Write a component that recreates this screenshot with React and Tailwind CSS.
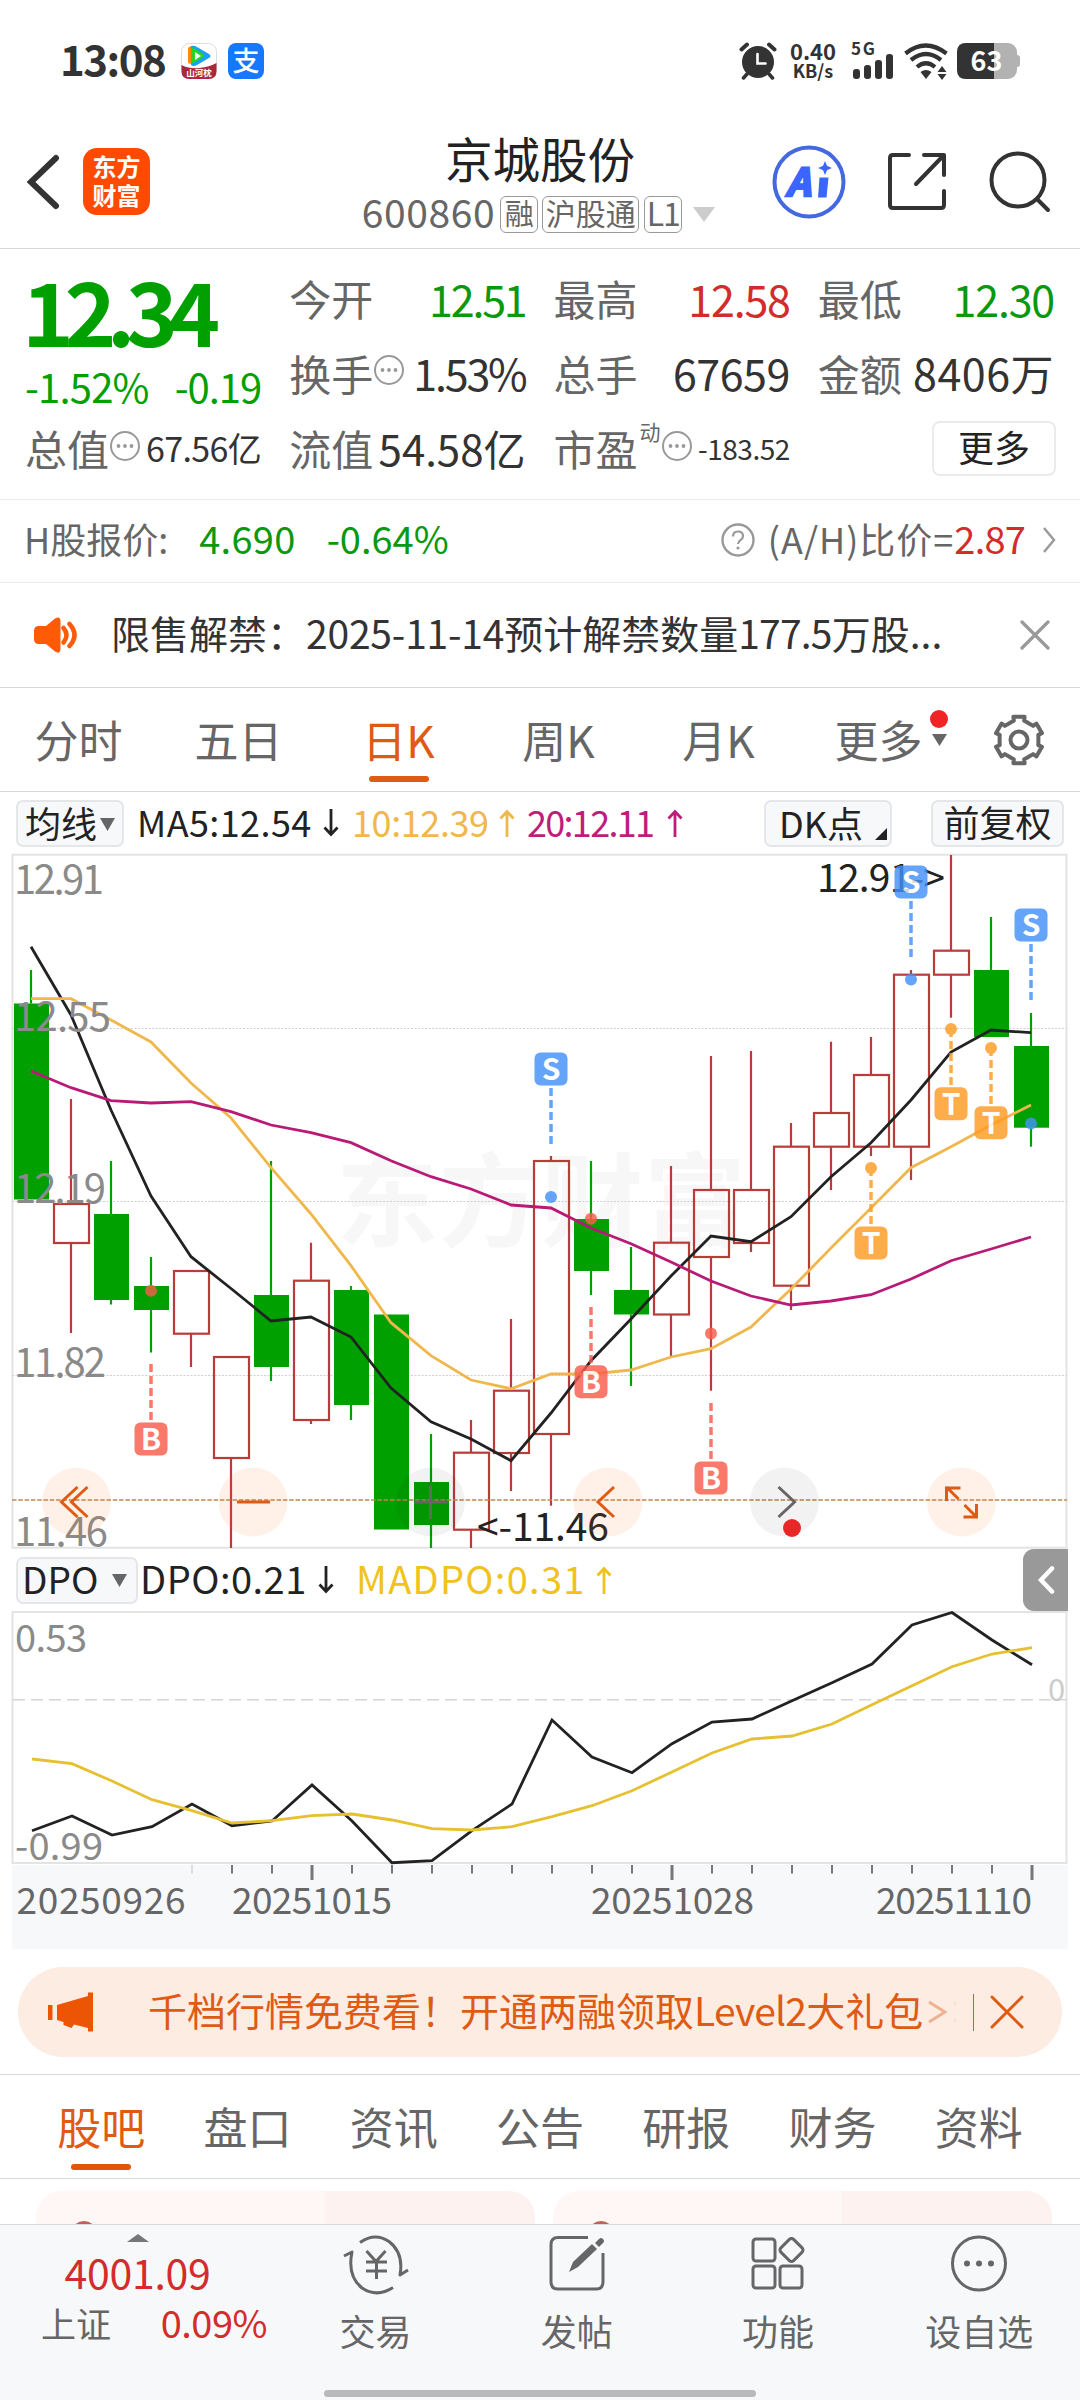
const GREEN = "#00a000";
const RED = "#b83c3a";

// [type, high, top, bottom, low]
const candles = [
  ["g", 970, 1003.5, 1199.5, 1199.5],
  ["r", 1099, 1204, 1243, 1333],
  ["g", 1161, 1214, 1300, 1304.5],
  ["g", 1257, 1286, 1310, 1352.5],
  ["r", 1271, 1271, 1333.7, 1367],
  ["r", 1357, 1357, 1458, 1548],
  ["g", 1161, 1295, 1367, 1381],
  ["r", 1242.7, 1280.7, 1420, 1424],
  ["g", 1286, 1290, 1405, 1420],
  ["g", 1314.5, 1314.5, 1529.5, 1529.5],
  ["g", 1434, 1482, 1525, 1548],
  ["r", 1420, 1452.7, 1529.7, 1548],
  ["r", 1319, 1390.7, 1453, 1491],
  ["r", 1156, 1161, 1434, 1505.7],
  ["g", 1161, 1219, 1271, 1295],
  ["g", 1247, 1290, 1314.5, 1386],
  ["r", 1166, 1242.7, 1314.5, 1356],
  ["r", 1056, 1190, 1257, 1390.7],
  ["r", 1051, 1190, 1243, 1252],
  ["r", 1123, 1146.7, 1285.7, 1310],
  ["r", 1041.7, 1113, 1146.7, 1190],
  ["r", 1037, 1075, 1146.7, 1156],
  ["r", 970, 974.7, 1146.7, 1180],
  ["r", 855, 950.7, 974.7, 1017.7],
  ["g", 917, 970, 1037, 1037],
  ["g", 1013, 1046, 1127.7, 1146.7],
];

const ma5 = [946.7, 1015, 1110, 1196, 1256.7, 1288.5, 1321, 1317, 1337, 1388, 1421.7, 1439, 1460.7, 1413, 1360.7, 1319, 1276, 1236, 1241.7, 1216.7, 1176.7, 1142.7, 1100, 1052, 1030, 1032.7];
const ma10 = [998.7, 998.7, 1020, 1042, 1083, 1118, 1167.7, 1214, 1265.7, 1322.7, 1355.7, 1380, 1388.7, 1374, 1374, 1370, 1357, 1348.7, 1327, 1289, 1248, 1208, 1167.7, 1146.7, 1125, 1105];
const ma20 = [1071, 1087.7, 1100.7, 1103, 1101.7, 1111.7, 1125, 1132.7, 1142.7, 1160.7, 1176.7, 1189, 1205, 1208, 1228, 1243.7, 1262, 1281, 1296, 1305, 1301, 1294.7, 1279, 1260.7, 1249, 1237];
const dpo = [1830.7, 1816, 1835, 1826.7, 1804, 1825.7, 1821, 1785, 1821, 1862.7, 1860.7, 1830.7, 1804, 1720, 1757, 1772.7, 1743.7, 1722, 1719, 1700.7, 1682.7, 1664, 1625, 1612.5, 1640, 1664.7];
const madpo = [1759, 1763.7, 1781, 1799.7, 1810.7, 1823, 1820.7, 1815.7, 1814, 1820, 1828.7, 1830, 1826.7, 1816.7, 1805.7, 1790.7, 1772, 1753, 1739, 1736, 1724, 1704.7, 1685.7, 1666.7, 1654, 1647.7];

// buy / sell / T markers: letter, x, badge centre, dash range, dot
const markers = [
  { t: "S", x: 551, y: 1069, from: 1088, to: 1145, dot: 1197 },
  { t: "S", x: 911, y: 882, from: 901, to: 958, dot: 979.5 },
  { t: "S", x: 1031, y: 925, from: 944, to: 1001, dot: 1123.5 },
  { t: "B", x: 151, y: 1439, from: 1364, to: 1421, dot: 1290.7 },
  { t: "B", x: 591, y: 1381.7, from: 1307, to: 1364, dot: 1218.7 },
  { t: "B", x: 711, y: 1478, from: 1403, to: 1460, dot: 1333.5 },
  { t: "T", x: 871, y: 1243, from: 1168, to: 1225, dot: 1168 },
  { t: "T", x: 951, y: 1103.7, from: 1029, to: 1086, dot: 1029 },
  { t: "T", x: 991, y: 1122.7, from: 1048, to: 1105, dot: 1048 },
];
const markerColor = { S: "#4391fa", B: "#fb5c4a", T: "#ff9a24" };

const points = (arr, x0) => arr.map((y, i) => `${x0 + i * 40},${y}`).join(" ");

function InfoDots() {
  return (
    <svg className="w-[32px] h-[32px] shrink-0 -mt-[5px]" viewBox="0 0 32 32" fill="none">
      <circle cx="16" cy="16" r="14" stroke="#999" strokeWidth="2" />
      <circle cx="9.5" cy="16" r="1.9" fill="#999" />
      <circle cx="16" cy="16" r="1.9" fill="#999" />
      <circle cx="22.5" cy="16" r="1.9" fill="#999" />
    </svg>
  );
}

function StatusBar() {
  return (
    <div className="h-[122px] flex items-center px-[60px] text-[#333]">
      <div className="w-[106px] text-[42px] leading-none font-bold tracking-[-1.500px] -mt-[6px]">13:08</div>
      <svg className="ml-[15px] w-[36px] h-[36px] overflow-visible" viewBox="0 0 36 36">
        <rect x=".5" y=".5" width="35" height="35" rx="8" fill="#fff" stroke="#ddd" />
        <path d="M7 6q0-3 3-2.500v17q-3 1-3-2z" fill="#ff8a00" />
        <path d="M10 3q3-1 6 1l12 7q3 2 0 4l-12 7q-4 2-6 0z" fill="#1ca0f5" />
        <path d="M10 5q2 0 4 1l8 5q2 1.500 0 3l-8 5q-2 1-4 1z" fill="#2bd41c" />
        <path d="M14 9l6 4-6 4z" fill="#fff" />
        <path d="M.5 22q8 4 18 3t17-5v8q0 8-8 8h-19q-8 0-8-8z" fill="#a92839" />
        <text x="18" y="33" fontSize="8.500" fontWeight="bold" fill="#fff" textAnchor="middle">山河枕</text>
      </svg>
      <svg className="ml-[11px] w-[36px] h-[36px] overflow-visible" viewBox="0 0 36 36">
        <rect width="36" height="36" rx="8" fill="#1677ff" />
        <text x="18" y="28" fontSize="27" fill="#fff" textAnchor="middle" fontWeight="500">支</text>
      </svg>

      <svg className="ml-auto w-[38px] h-[38px]" viewBox="0 0 38 38" stroke="#333" fill="none" strokeLinecap="round">
        <circle cx="19" cy="20" r="16" fill="#333" stroke="none" />
        <path d="M2.500 7.500L8 2.500M35.500 7.500L30 2.500" strokeWidth="4" />
        <path d="M8 32l-3.500 4M30 32l3.500 4" strokeWidth="3.500" />
        <path d="M18.500 12v9.500h8" stroke="#fff" strokeWidth="2.600" />
      </svg>
      <div className="ml-[11px] w-[50px] text-center font-bold -mt-[3px]">
        <div className="text-[22px] leading-[21px]">0.40</div>
        <div className="text-[18px] leading-[18px]">KB/s</div>
      </div>
      <svg className="ml-[13px] w-[43px] h-[38px] overflow-visible" viewBox="0 0 43 38" fill="#333">
        <text x="0" y="13" fontSize="17" fontWeight="bold" textLength="24">5G</text>
        <rect x="2" y="27" width="7" height="10" rx="3" />
        <rect x="13" y="23" width="7" height="14" rx="3" />
        <rect x="24" y="18" width="7" height="19" rx="3" />
        <rect x="35" y="12" width="7" height="25" rx="3" />
      </svg>
      <svg className="ml-[10px] w-[44px] h-[38px]" viewBox="0 0 44 38" fill="none" stroke="#333" strokeWidth="4.200">
        <path d="M1.500 11.500q20-16 41 0" />
        <path d="M7 18q15-12 30 0" />
        <path d="M13 25q9-7.500 18 0" />
        <path d="M16.500 30q5.500-4 11 0l-5.500 7z" fill="#333" stroke="none" />
        <path d="M33.500 30l4.500-6 4.500 6zM33.500 32l4.500 6 4.500-6z" fill="#333" stroke="none" />
      </svg>
      <svg className="ml-[9px] w-[63px] h-[38px] overflow-visible" viewBox="0 0 63 38">
        <rect x="0" y="1" width="60" height="36" rx="9" fill="#b2b2b2" />
        <path d="M60 13q3 0 3 3v6q0 3-3 3z" fill="#b2b2b2" />
        <path d="M9 1h28v36H9q-9 0-9-9V10q0-9 9-9z" fill="#333" />
        <text x="29.500" y="29" fontSize="27" fontWeight="bold" fill="#fff" textAnchor="middle" textLength="32">63</text>
      </svg>
    </div>
  );
}

function Header() {
  return (
    <div className="h-[127px] border-b border-[#d8d8da] grid grid-cols-[340px_400px_1fr] items-center pb-[7px]">
      <div className="flex items-center pl-[26px]">
        <svg className="w-[34px] h-[56px]" viewBox="0 0 34 56" fill="none" stroke="#333" strokeWidth="6" strokeLinecap="round">
          <path d="M30 4L5 28l25 24" />
        </svg>
        <div className="ml-[23px] w-[67px] h-[67px] rounded-[14px] bg-[#ff4a00] text-white font-bold text-[24px] leading-[29px] text-center pt-[3px]">
          东方<br />财富
        </div>
      </div>
      <div className="flex flex-col items-center">
        <div className="text-[47.500px] leading-none text-[#222]">京城股份</div>
        <div className="mt-[14px] -mb-[4px] -ml-[3px] flex items-center text-[#666]">
          <span className="text-[39px] leading-none tracking-[0.600px] -mt-[6px]">600860</span>
          <span className="ml-[5px] w-[38px] h-[37px] border border-[#999] rounded-[6px] text-[29px] leading-[30px] text-center">融</span>
          <span className="ml-[4px] w-[97px] h-[37px] border border-[#999] rounded-[6px] text-[30px] leading-[30px] text-center">沪股通</span>
          <span className="ml-[5px] w-[38px] h-[37px] border border-[#999] rounded-[6px] text-[32px] leading-[30px] text-center tracking-[-1px]">L1</span>
          <svg className="ml-[11px] w-[22px] h-[15px]" viewBox="0 0 22 15"><path d="M0 0h22L11 15z" fill="#ccc" /></svg>
        </div>
      </div>
      <div className="flex items-center pl-[32px]">
        <svg className="w-[74px] h-[74px] overflow-visible" viewBox="0 0 74 74" fill="none">
          <circle cx="37" cy="37" r="34.500" stroke="#4468e0" strokeWidth="4" />
          <text x="14" y="51" fontSize="38" fontWeight="bold" fill="#3a66ff" stroke="#3a66ff" strokeWidth="2.500" fontStyle="italic" textLength="27">A</text>
          <path d="M47.500 32.500h9l-2 20h-8.500z" fill="#3a66ff" />
          <path d="M53 18l1.500 3.500 3.500 1.500-3.500 1.500-1.500 3.500-1.500-3.500-3.500-1.500 3.500-1.500z" fill="#3a66ff" stroke="#3a66ff" strokeWidth="1.500" />
        </svg>
        <svg className="ml-[41px] w-[60px] h-[60px]" viewBox="0 0 60 60" fill="none" stroke="#333" strokeWidth="4" strokeLinecap="round" strokeLinejoin="round">
          <path d="M22 3H6Q3 3 3 6v47q0 3 3 3h48q3 0 3-3V39M37 3h20v20M57 3L29 32" />
        </svg>
        <svg className="ml-[42px] w-[62px] h-[62px]" viewBox="0 0 62 62" fill="none" stroke="#333" strokeWidth="4" strokeLinecap="round">
          <circle cx="29" cy="29" r="26.500" />
          <path d="M48 48l11 11" />
        </svg>
      </div>
    </div>
  );
}

function Quote({ label, children, color = "text-[#333]" }) {
  return (
    <div className="flex items-center justify-between text-[43px] leading-none whitespace-nowrap">
      <span className="text-[42px] text-[#666] flex items-center">{label}</span>
      <span className={color}>{children}</span>
    </div>
  );
}

function QuotePanel() {
  return (
    <div className="h-[251px] border-b border-[#ebebeb] pl-[25px] pr-[26px] pt-[12px] grid grid-cols-4 grid-rows-[74px_75px_76px] gap-x-[28px]">
      <div className="row-span-2 text-[#00a000]">
        <div className="text-[88px] leading-[89px] font-bold tracking-[-9.500px] mt-[3px] -ml-[3px]">12.34</div>
        <div className="flex justify-between text-[40px] leading-none mt-[13px]">
          <span className="tracking-[-0.800px]">-1.52%</span>
          <span className="tracking-[-1px]">-0.19</span>
        </div>
      </div>
      <Quote label="今开" color="text-[#0a980f] tracking-[-2.200px]">12.51</Quote>
      <Quote label="最高" color="text-[#d42c2c] tracking-[-1.200px]">12.58</Quote>
      <Quote label="最低" color="text-[#0a980f] tracking-[-1.200px]">12.30</Quote>
      <Quote label={<>换手<InfoDots /></>} color="text-[#333] tracking-[-2.200px]">1.53%</Quote>
      <Quote label="总手" color="text-[#333] tracking-[-0.500px]">67659</Quote>
      <Quote label="金额" color="text-[#333] tracking-[0.500px]">8406万</Quote>
      <Quote label={<>总值<InfoDots /></>} color="text-[#333] text-[34px] tracking-[-0.600px]">67.56亿</Quote>
      <Quote label="流值" color="text-[#333] text-[42px]">54.58亿</Quote>
      <Quote label={<>市盈<span className="text-[21px] -mt-[34px] ml-[2px]">动</span><InfoDots /></>} color="text-[#333] text-[28px] tracking-[-0.500px]">-183.52</Quote>
      <div className="flex items-center justify-end">
        <div className="-mr-[2px] w-[124px] h-[55px] border-2 border-[#ebebeb] rounded-[8px] text-[36px] leading-[47px] text-center text-[#222]">更多</div>
      </div>
    </div>
  );
}

function HShareRow() {
  return (
    <div className="h-[83px] border-b border-[#ebebeb] flex items-center px-[24px] pb-[6px] text-[36px] leading-none text-[#666] whitespace-nowrap">
      <span>H股报价:</span>
      <span className="ml-[31px] text-[38px] text-[#0a980f] tracking-[0.300px]">4.690</span>
      <span className="ml-[31px] text-[38px] text-[#0a980f]">-0.64%</span>
      <svg className="ml-auto w-[34px] h-[34px] mt-[3px]" viewBox="0 0 34 34" fill="none">
        <circle cx="17" cy="17" r="15.500" stroke="#999" strokeWidth="2.400" />
        <path d="M12 13.500q0-5 5-5t5 4.500q0 2.500-2.500 4.200T17 21" stroke="#999" strokeWidth="2.200" />
        <circle cx="17" cy="25" r="1.600" fill="#999" />
      </svg>
      <span className="ml-[13px] tracking-[1px]">(A/H)比价=</span>
      <span className="text-[38px] text-[#d42c2c] tracking-[-0.800px]">2.87</span>
      <svg className="ml-[17px] w-[14px] h-[26px] mt-[3px]" viewBox="0 0 14 26" fill="none" stroke="#999" strokeWidth="2.400">
        <path d="M2 1l10 12L2 25" />
      </svg>
    </div>
  );
}

function Notice() {
  return (
    <div className="h-[105px] border-b border-[#d8d8da] flex items-center pl-[33px] pr-[30px]">
      <svg className="w-[46px] h-[36px]" viewBox="0 0 46 36">
        <path d="M6 9h7L22 1.500q5-3 5.500 2v29q-.5 5-5.500 2L13 27H6q-5 0-5-5v-8q0-5 5-5z" fill="#ff5a05" />
        <path d="M30.500 11q6 7 0 14.500M36.500 7q10 11 0 22" fill="none" stroke="#ff5a05" strokeWidth="4.500" strokeLinecap="round" />
      </svg>
      <span className="ml-[32px] text-[39px] leading-none text-[#333] whitespace-nowrap -mt-[6px]">
        限售解禁：<span className="tracking-[-0.200px]">2025-11-14</span>预计解禁数量<span className="tracking-[-0.800px]">177.5</span>万股...
      </span>
      <svg className="ml-auto w-[30px] h-[30px]" viewBox="0 0 30 30" stroke="#999" strokeWidth="3.200" strokeLinecap="round">
        <path d="M2 2l26 26M28 2L2 28" />
      </svg>
    </div>
  );
}

function Gear() {
  const pts = [];
  for (let k = 0; k < 6; k++) {
    const a = -90 + k * 60;
    [[19.5, -23], [20, -15], [24, -13.5], [24, 13.5], [20, 15], [19.5, 23]].forEach(([r, d]) => {
      const t = ((a + d) * Math.PI) / 180;
      pts.push(`${(26 + r * Math.cos(t)).toFixed(1)},${(26 + r * Math.sin(t)).toFixed(1)}`);
    });
  }
  return (
    <svg className="w-[52px] h-[52px]" viewBox="0 0 52 52" fill="none" stroke="#666" strokeWidth="4" strokeLinejoin="round">
      <polygon points={pts.join(" ")} />
      <circle cx="26" cy="26" r="8.500" />
    </svg>
  );
}

function PeriodTabs() {
  const tabs = ["分时", "五日", "日K", "周K", "月K", "更多"];
  return (
    <div className="h-[104px] border-b border-[#d8d8da] flex text-[44px] leading-none text-[#666]">
      {tabs.map((t) => (
        <div key={t} className={`w-[160px] flex flex-col items-center pt-[29px] pr-[3px] ${t === "日K" ? "text-[#df5a12]" : ""}`}>
          <span className="relative">
            {t}
            {t === "更多" && (
              <span className="absolute left-full top-0 ml-[7px]">
                <span className="block w-[18px] h-[18px] rounded-full bg-[#f02424] -mt-[7px]" />
                <svg className="w-[15px] h-[12px] mt-[6px] ml-[2px]" viewBox="0 0 15 12"><path d="M0 0h15L7.500 12z" fill="#666" /></svg>
              </span>
            )}
          </span>
          {t === "日K" && <span className="mt-[15px] w-[60px] h-[6px] rounded-full bg-[#df5a12]" />}
        </div>
      ))}
      <div className="flex-1 flex justify-center pt-[26px] pr-[3px]"><Gear /></div>
    </div>
  );
}

function Arrow({ up, color }) {
  return (
    <svg className="w-[16px] h-[28px]" viewBox="0 0 16 28" fill="none" stroke={color} strokeWidth="2.800">
      {up ? <path d="M8 28V3M1.500 9.500L8 2.500l6.500 7" /> : <path d="M8 0v25M1.500 18.500L8 25.500l6.500-7" />}
    </svg>
  );
}

function MaRow() {
  return (
    <div className="h-[62px] flex items-center px-[16px] text-[36px] leading-none whitespace-nowrap text-[#222]">
      <div className="w-[108px] h-[47px] rounded-[7px] border-2 border-[#e5e6ea] bg-[#f7f8fa] flex items-center justify-center pb-[2px]">
        均线
        <svg className="ml-[3px] mt-[4px] w-[15px] h-[13px]" viewBox="0 0 15 13"><path d="M0 0h15L7.500 13z" fill="#666" /></svg>
      </div>
      <div className="flex items-center">
        <span className="ml-[13px] w-[186px] -mt-[4px] tracking-[0.400px]">MA5:12.54</span>
        <Arrow color="#222" />
        <span className="ml-[13px] w-[147px] -mt-[4px] text-[#f0b84c] tracking-[-0.400px]">10:12.39</span>
        <Arrow up color="#f0b84c" />
        <span className="ml-[12px] w-[140px] -mt-[4px] text-[#c01c7c] tracking-[-1.700px]">20:12.11</span>
        <Arrow up color="#c01c7c" />
      </div>
      <div className="ml-auto w-[128px] h-[47px] rounded-[7px] border-2 border-[#e5e6ea] bg-[#f7f8fa] flex items-end pl-[13px] pb-[5px]">
        DK点
        <svg className="ml-[12px] w-[12px] h-[12px]" viewBox="0 0 12 12"><path d="M12 0v12H0z" fill="#222" /></svg>
      </div>
      <div className="ml-[39px] w-[133px] h-[47px] rounded-[7px] border-2 border-[#e5e6ea] bg-[#f7f8fa] leading-[38px] text-center">前复权</div>
    </div>
  );
}

function RoundButton({ x, gray, children }) {
  return (
    <g transform={`translate(${x} 1502)`} fill="none" stroke={gray ? "#666" : "#df5a12"} strokeWidth="3">
      <circle r="34.500" fill={gray ? "#000" : "#ff6a1a"} fillOpacity={gray ? 0.05 : 0.1} stroke="none" />
      {children}
    </g>
  );
}

function KChart() {
  return (
    <svg className="block w-[1080px] h-[695px] overflow-visible" viewBox="0 854 1080 695">
      <rect x="12.500" y="854.700" width="1054" height="693" fill="none" stroke="#e3e3e5" strokeWidth="2" />
      <text x="336" y="1239" fontSize="102" fontWeight="bold" fill="#f7f7f7" textLength="410">东方财富</text>
      {[1028.5, 1201.5, 1375.5].map((y) => (
        <line key={y} x1="12" x2="1067" y1={y} y2={y} stroke="#d0d0d0" strokeWidth="1" strokeDasharray="2 1.500" />
      ))}
      {candles.map(([c, hi, top, bot, lo], i) => {
        const x = 31 + i * 40;
        const color = c === "g" ? GREEN : RED;
        return (
          <g key={i} stroke={color} strokeWidth="2.200">
            <line x1={x} x2={x} y1={hi} y2={top} />
            <line x1={x} x2={x} y1={bot} y2={lo} />
            {c === "g" ? (
              <rect x={x - 17} y={top} width="35" height={bot - top} fill={color} stroke="none" />
            ) : (
              <rect x={x - 17} y={top} width="35" height={bot - top} fill="none" />
            )}
          </g>
        );
      })}
      <g fill="none" strokeWidth="2.800">
        <polyline points={points(ma5, 31)} stroke="#222" />
        <polyline points={points(ma10, 31)} stroke="#f0b84c" />
        <polyline points={points(ma20, 31)} stroke="#b81a75" />
      </g>
      <g fill="#222" fontSize="39">
        <text x="817" y="892" textLength="128">12.91-&gt;</text>
        <text x="477" y="1541" textLength="132">&lt;-11.46</text>
      </g>
      <g fill="#8a8a8a" fontSize="40">
        <text x="14" y="894" textLength="90">12.91</text>
        <text x="14" y="1030.500" textLength="97">12.55</text>
        <text x="14" y="1203" textLength="92">12.19</text>
        <text x="14" y="1377" textLength="92">11.82</text>
        <text x="14" y="1546" textLength="94">11.46</text>
      </g>
      {markers.map((m, i) => (
        <g key={i} opacity="0.82" fill={markerColor[m.t]}>
          <line x1={m.x} x2={m.x} y1={m.from} y2={m.to} stroke={markerColor[m.t]} strokeWidth="3.500" strokeDasharray="8 4" />
          <circle cx={m.x} cy={m.dot} r="6" />
          <rect x={m.x - 16.5} y={m.y - 16.5} width="33" height="33" rx="6" />
          <text x={m.x} y={m.y + 11} fontSize="30" fontWeight="bold" fill="#fff" textAnchor="middle">{m.t}</text>
        </g>
      ))}
      <line x1="12" x2="1067" y1="1500" y2="1500" stroke="#c08850" strokeWidth="1.400" strokeDasharray="4.500 1.800" />
      <RoundButton x={76.5}><path d="M1-15L-15 0 1 15M11-15L-5 0 11 15" /></RoundButton>
      <RoundButton x={253}><path d="M-16 0h33" /></RoundButton>
      <RoundButton x={430.5} gray><path d="M-16 0h33M0-16v33" /></RoundButton>
      <RoundButton x={608}><path d="M6-15L-10 0 6 15" /></RoundButton>
      <RoundButton x={784.5} gray>
        <path d="M-6-15L10 0-6 15" />
        <circle cx="7.500" cy="26" r="9" fill="#e82828" stroke="none" />
      </RoundButton>
      <RoundButton x={961.5}><path d="M-15-1v-13H-1M-15-15L-3-3M3 3l12 12M15 2v13H2" /></RoundButton>
    </svg>
  );
}

function DpoRow() {
  return (
    <div className="h-[62px] flex items-center pl-[16px] pr-[12px] text-[38px] leading-none whitespace-nowrap text-[#222]">
      <div className="w-[122px] h-[47px] rounded-[7px] border-2 border-[#e5e6ea] bg-[#f7f8fa] flex items-center pl-[4px] pb-[3px] text-[37px]">
        DPO
        <svg className="ml-[14px] mt-[3px] w-[15px] h-[13px]" viewBox="0 0 15 13"><path d="M0 0h15L7.500 13z" fill="#666" /></svg>
      </div>
      <span className="ml-[2px] w-[178px] -mt-[4px] tracking-[0.500px]">DPO:0.21</span>
      <Arrow color="#222" />
      <span className="ml-[22px] w-[240px] -mt-[4px] text-[#f0c21c] tracking-[1.300px]">MADPO:0.31</span>
      <Arrow up color="#f0c21c" />
      <div className="ml-auto w-[45px] h-[62px] rounded-l-[11px] bg-[#999] flex items-center justify-center">
        <svg className="w-[20px] h-[28px]" viewBox="0 0 20 28" fill="none" stroke="#fff" strokeWidth="4.500" strokeLinecap="round">
          <path d="M16 2.500L5 14l11 11.500" />
        </svg>
      </div>
    </div>
  );
}

function DpoChart() {
  return (
    <svg className="block w-[1080px] h-[338px]" viewBox="0 1611 1080 338">
      <rect x="12.500" y="1612" width="1054" height="251" fill="none" stroke="#e3e3e5" strokeWidth="2" />
      <rect x="12" y="1865" width="1056" height="84" fill="#f7f8fa" />
      <line x1="13" x2="1067" y1="1699.700" y2="1699.700" stroke="#d6d6d6" strokeWidth="1.400" strokeDasharray="12 6" />
      <text x="1048" y="1701" fontSize="31" fill="#ccc">0</text>
      <g fill="none" strokeWidth="2.800">
        <polyline points={points(dpo, 32)} stroke="#222" />
        <polyline points={points(madpo, 32)} stroke="#e6c030" />
      </g>
      <g fill="#8a8a8a" fontSize="38">
        <text x="15" y="1652" textLength="72">0.53</text>
        <text x="15" y="1860" textLength="88">-0.99</text>
      </g>
      {Array.from({ length: 22 }, (_, k) => {
        const i = k + 4;
        const major = i === 7 || i === 16 || i === 25;
        return (
          <line key={i} x1={32 + i * 40} x2={32 + i * 40} y1="1865" y2={major ? 1880 : 1873.5}
            stroke={i === 4 ? "#ddd" : "#777"} strokeWidth={major ? 3 : 2} />
        );
      })}
      <g fill="#666" fontSize="37">
        <text x="16.500" y="1914" textLength="169">20250926</text>
        <text x="232" y="1914" textLength="160">20251015</text>
        <text x="591" y="1914" textLength="163">20251028</text>
        <text x="876" y="1914" textLength="156">20251110</text>
      </g>
    </svg>
  );
}

function Banner() {
  return (
    <div className="mt-[18px] mx-[18px] h-[90px] rounded-full bg-[#fcece2] flex items-center pl-[29px] pr-[38px] text-[39px] leading-none text-[#df5a12] whitespace-nowrap">
      <svg className="w-[47px] h-[40px]" viewBox="0 0 47 40" fill="#eb5503">
        <path d="M1 13h4.500v15H1zM10 13L41 4V.500h5V39.500h-5V36l-14-3.500-2.500 3.500-8-3V30L10 28z" />
      </svg>
      <span className="ml-[54px] -mt-[5px]">千档行情免费看！开通两融领取<span className="tracking-[-0.800px]">Level2</span>大礼包</span>
      <svg className="ml-[5px] w-[30px] h-[24px]" viewBox="0 0 30 24" fill="none" stroke="#eeb08e" strokeWidth="2.800">
        <path d="M1 2l16 10L1 22" />
        <path d="M27 2v3M27 19v3" stroke="#f9dccb" strokeWidth="2" />
      </svg>
      <span className="ml-auto w-px h-[37px] bg-[#df5a12]" />
      <svg className="ml-[16px] w-[34px] h-[34px]" viewBox="0 0 34 34" stroke="#df5a12" strokeWidth="3" strokeLinecap="round">
        <path d="M2 2l30 30M32 2L2 32" />
      </svg>
    </div>
  );
}

function InfoTabs() {
  return (
    <div className="mt-[17px] h-[105px] border-y border-[#d8d8da] flex px-[28px] text-[44px] leading-none text-[#666]">
      {["股吧", "盘口", "资讯", "公告", "研报", "财务", "资料"].map((t, i) => (
        <div key={t} className={`flex-1 flex flex-col items-center pt-[29px] ${i === 0 ? "text-[#df5a12]" : ""}`}>
          {t}
          {i === 0 && <span className="mt-[16px] w-[60px] h-[6px] rounded-full bg-[#e3560a]" />}
        </div>
      ))}
    </div>
  );
}

function Cards() {
  return (
    <div className="mt-[12px] h-[33px] overflow-hidden flex gap-[18px] pl-[36px]">
      {[0, 1].map((i) => (
        <div key={i} className="w-[499px] h-[120px] shrink-0 rounded-[26px] bg-linear-to-r from-[#fef7f5] from-58% to-[#fdf2f0] to-58% pl-[35px] pt-[30px]">
          <div className="w-[26px] h-[26px] rounded-full bg-[#c4605a]" />
        </div>
      ))}
    </div>
  );
}

function NavItem({ label, children }) {
  return (
    <div className="flex-1 flex flex-col items-center pt-[9px] text-[36px] leading-none text-[#666]">
      <svg className="w-[66px] h-[62px]" viewBox="0 0 66 62" fill="none" stroke="#666" strokeWidth="3">{children}</svg>
      <span className="mt-[16px]">{label}</span>
    </div>
  );
}

function BottomBar() {
  return (
    <div className="h-[176px] border-t border-[#d8d8da] bg-[#f7f8fa] flex flex-col">
      <div className="flex flex-1">
        <div className="w-[275px] flex flex-col items-center pt-[9px] text-[#d42c2c] leading-none">
          <svg className="w-[22px] h-[8px]" viewBox="0 0 22 8"><path d="M0 8h22L11 0z" fill="#777" /></svg>
          <span className="mt-[9px] text-[41px] tracking-[-0.300px]">4001.09</span>
          <div className="w-full pl-[41px] pr-[8px] flex justify-between items-center mt-[11px] text-[38px]">
            <span className="text-[35px] text-[#666]">上证</span>
            <span className="tracking-[-0.500px]">0.09%</span>
          </div>
        </div>
        <NavItem label="交易">
          <path d="M17 8.500Q32-2 46 7.500 61 19 57 41l8-5M50 53.500Q34 64 19 54 4 42 9 18l-8 4" strokeLinejoin="round" />
          <path d="M23.500 17L33 27.500 42.500 17M23 28h21M23 37h21M33.500 27v18" />
        </NavItem>
        <NavItem label="发帖">
          <path d="M44 3.500H14q-7 0-7 7V48q0 7 7 7h38q7 0 7-7V19" />
          <path d="M25 38l4-10 19-18 5 5-19 18z" fill="#666" stroke="none" />
          <path d="M51 9l4-4q2-2 4 0t0 4l-4 4z" fill="#666" stroke="none" />
        </NavItem>
        <NavItem label="功能">
          <rect x="8" y="5" width="22" height="22" rx="3" />
          <rect x="8" y="32" width="22" height="22" rx="3" />
          <rect x="35" y="32" width="22" height="22" rx="3" />
          <rect x="37.500" y="7" width="18" height="18" rx="3" transform="rotate(45 46.500 16)" />
        </NavItem>
        <NavItem label="设自选">
          <circle cx="33" cy="29.500" r="26.500" />
          <circle cx="21" cy="29.500" r="3" fill="#666" stroke="none" />
          <circle cx="33" cy="29.500" r="3" fill="#666" stroke="none" />
          <circle cx="45" cy="29.500" r="3" fill="#666" stroke="none" />
        </NavItem>
      </div>
      <div className="self-center w-[432px] h-[7px] rounded-full bg-[#b9babc] mb-[3px]" />
    </div>
  );
}

export default function App() {
  return (
    <div className="w-[1080px] h-[2400px] overflow-hidden bg-white font-['Noto_Sans_CJK_SC',sans-serif]">
      <StatusBar />
      <Header />
      <QuotePanel />
      <HShareRow />
      <Notice />
      <PeriodTabs />
      <MaRow />
      <KChart />
      <DpoRow />
      <DpoChart />
      <Banner />
      <InfoTabs />
      <Cards />
      <BottomBar />
    </div>
  );
}
